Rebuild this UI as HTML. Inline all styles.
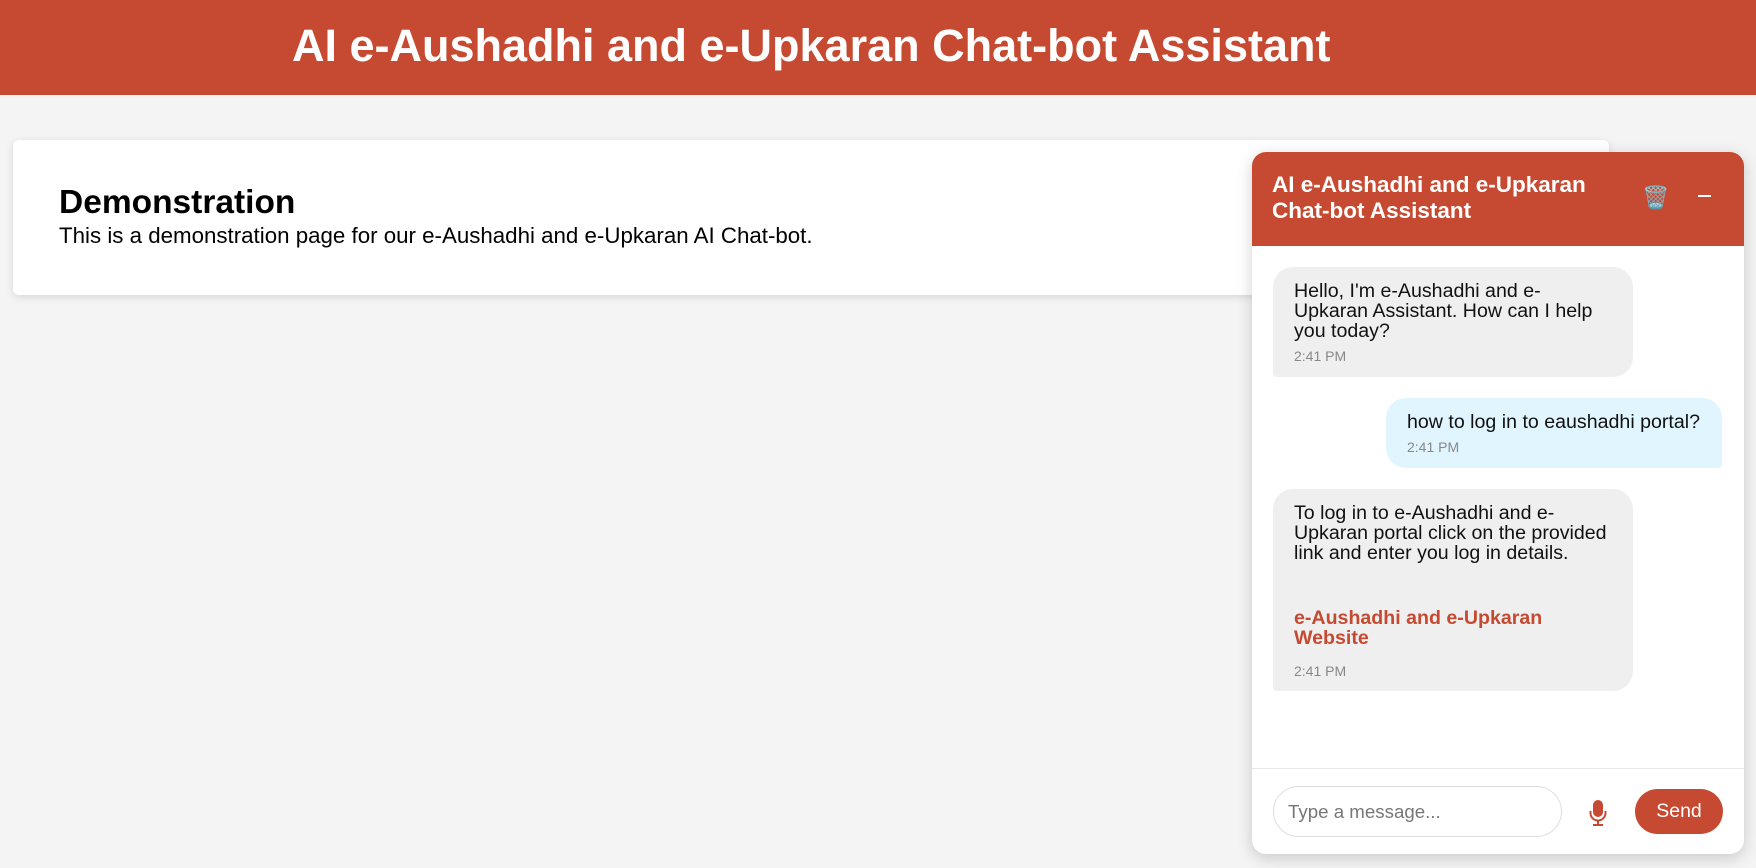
<!DOCTYPE html>
<html><head><meta charset="utf-8"><style>
*{box-sizing:border-box;margin:0;padding:0}
body{width:1756px;height:868px;background:#f4f4f4;font-family:"Liberation Sans",Arial,sans-serif;position:relative;overflow:hidden}
.top{position:absolute;left:0;top:0;width:1756px;height:95px;background:#c64a31}
.top h1{position:absolute;left:292px;top:20px;font-size:45px;color:#fff;font-weight:bold;white-space:nowrap;line-height:52px}
.card{position:absolute;left:13px;top:140px;width:1596px;height:155px;background:#fff;border-radius:6px;box-shadow:0 2px 8px rgba(0,0,0,.12)}
.card h2{position:absolute;left:46px;top:44px;font-size:33.5px;line-height:38px}
.card p{position:absolute;left:46px;top:83px;font-size:22.3px;line-height:26px;white-space:nowrap}
.chat{position:absolute;left:1252px;top:152px;width:492px;height:702px;background:#fff;border-radius:14px;box-shadow:0 4px 16px rgba(0,0,0,.18);overflow:hidden}
.ch{position:absolute;left:0;top:0;width:492px;height:94px;background:#c64a31;color:#fff}
.ch .t{position:absolute;left:20px;top:20px;font-size:22.5px;font-weight:bold;line-height:26px}
.ch .tr{position:absolute;left:390px;top:33px;font-size:22px}
.ch .mn{position:absolute;left:446px;top:43px;width:13px;height:2px;background:#fff}
.b{position:absolute;font-size:19.6px;line-height:20px;padding:14px 21px;color:#111}
.b .tm{font-size:14px;color:#888;margin-top:7px;line-height:16px}
.bot{left:21px;width:360px;background:#efefef;border-radius:20px 20px 20px 4px}
.usr{left:134px;width:336px;background:#e1f5fe;border-radius:20px 20px 4px 20px}
.lk{color:#c64a31;font-weight:bold;margin-top:45px}
.div{position:absolute;left:0;top:616px;width:492px;height:1px;background:#e6e6e6}
.in{position:absolute;left:21px;top:634px;width:289px;height:51px;border:1px solid #ddd;border-radius:26px;font-size:18.7px;color:#777;padding:14px 0 0 14px}
.send{position:absolute;left:383px;top:637px;width:88px;height:45px;background:#c64a31;border-radius:23px;color:#fff;font-size:19.5px;text-align:center;line-height:45px}
.mic{position:absolute;left:337px;top:648px}
</style></head><body>
<div class="top"><h1>AI e-Aushadhi and e-Upkaran Chat-bot Assistant</h1></div>
<div class="card"><h2>Demonstration</h2><p>This is a demonstration page for our e-Aushadhi and e-Upkaran AI Chat-bot.</p></div>
<div class="chat">
<div class="ch"><div class="t">AI e-Aushadhi and e-Upkaran<br>Chat-bot Assistant</div><div class="tr">🗑️</div><div class="mn"></div></div>
<div class="b bot" style="top:115px;height:110px">Hello, I'm e-Aushadhi and e-Upkaran Assistant. How can I help you today?<div class="tm">2:41 PM</div></div>
<div class="b usr" style="top:246px;height:70px">how to log in to eaushadhi portal?<div class="tm">2:41 PM</div></div>
<div class="b bot" style="top:337px;height:202px">To log in to e-Aushadhi and e-Upkaran portal click on the provided link and enter you log in details.<div class="lk">e-Aushadhi and e-Upkaran Website</div><div class="tm" style="margin-top:15px">2:41 PM</div></div>
<div class="div"></div>
<div class="in">Type a message...</div>
<svg class="mic" width="18" height="26" viewBox="0 0 18 26"><rect x="4" y="0" width="10" height="17" rx="5" fill="#c64a31"/><path d="M1.5 11v2a7.5 7.5 0 0 0 15 0v-2" fill="none" stroke="#c64a31" stroke-width="2"/><path d="M9 20.5v3.5M4 25h10" stroke="#c64a31" stroke-width="2"/></svg>
<div class="send">Send</div>
</div>
</body></html>
